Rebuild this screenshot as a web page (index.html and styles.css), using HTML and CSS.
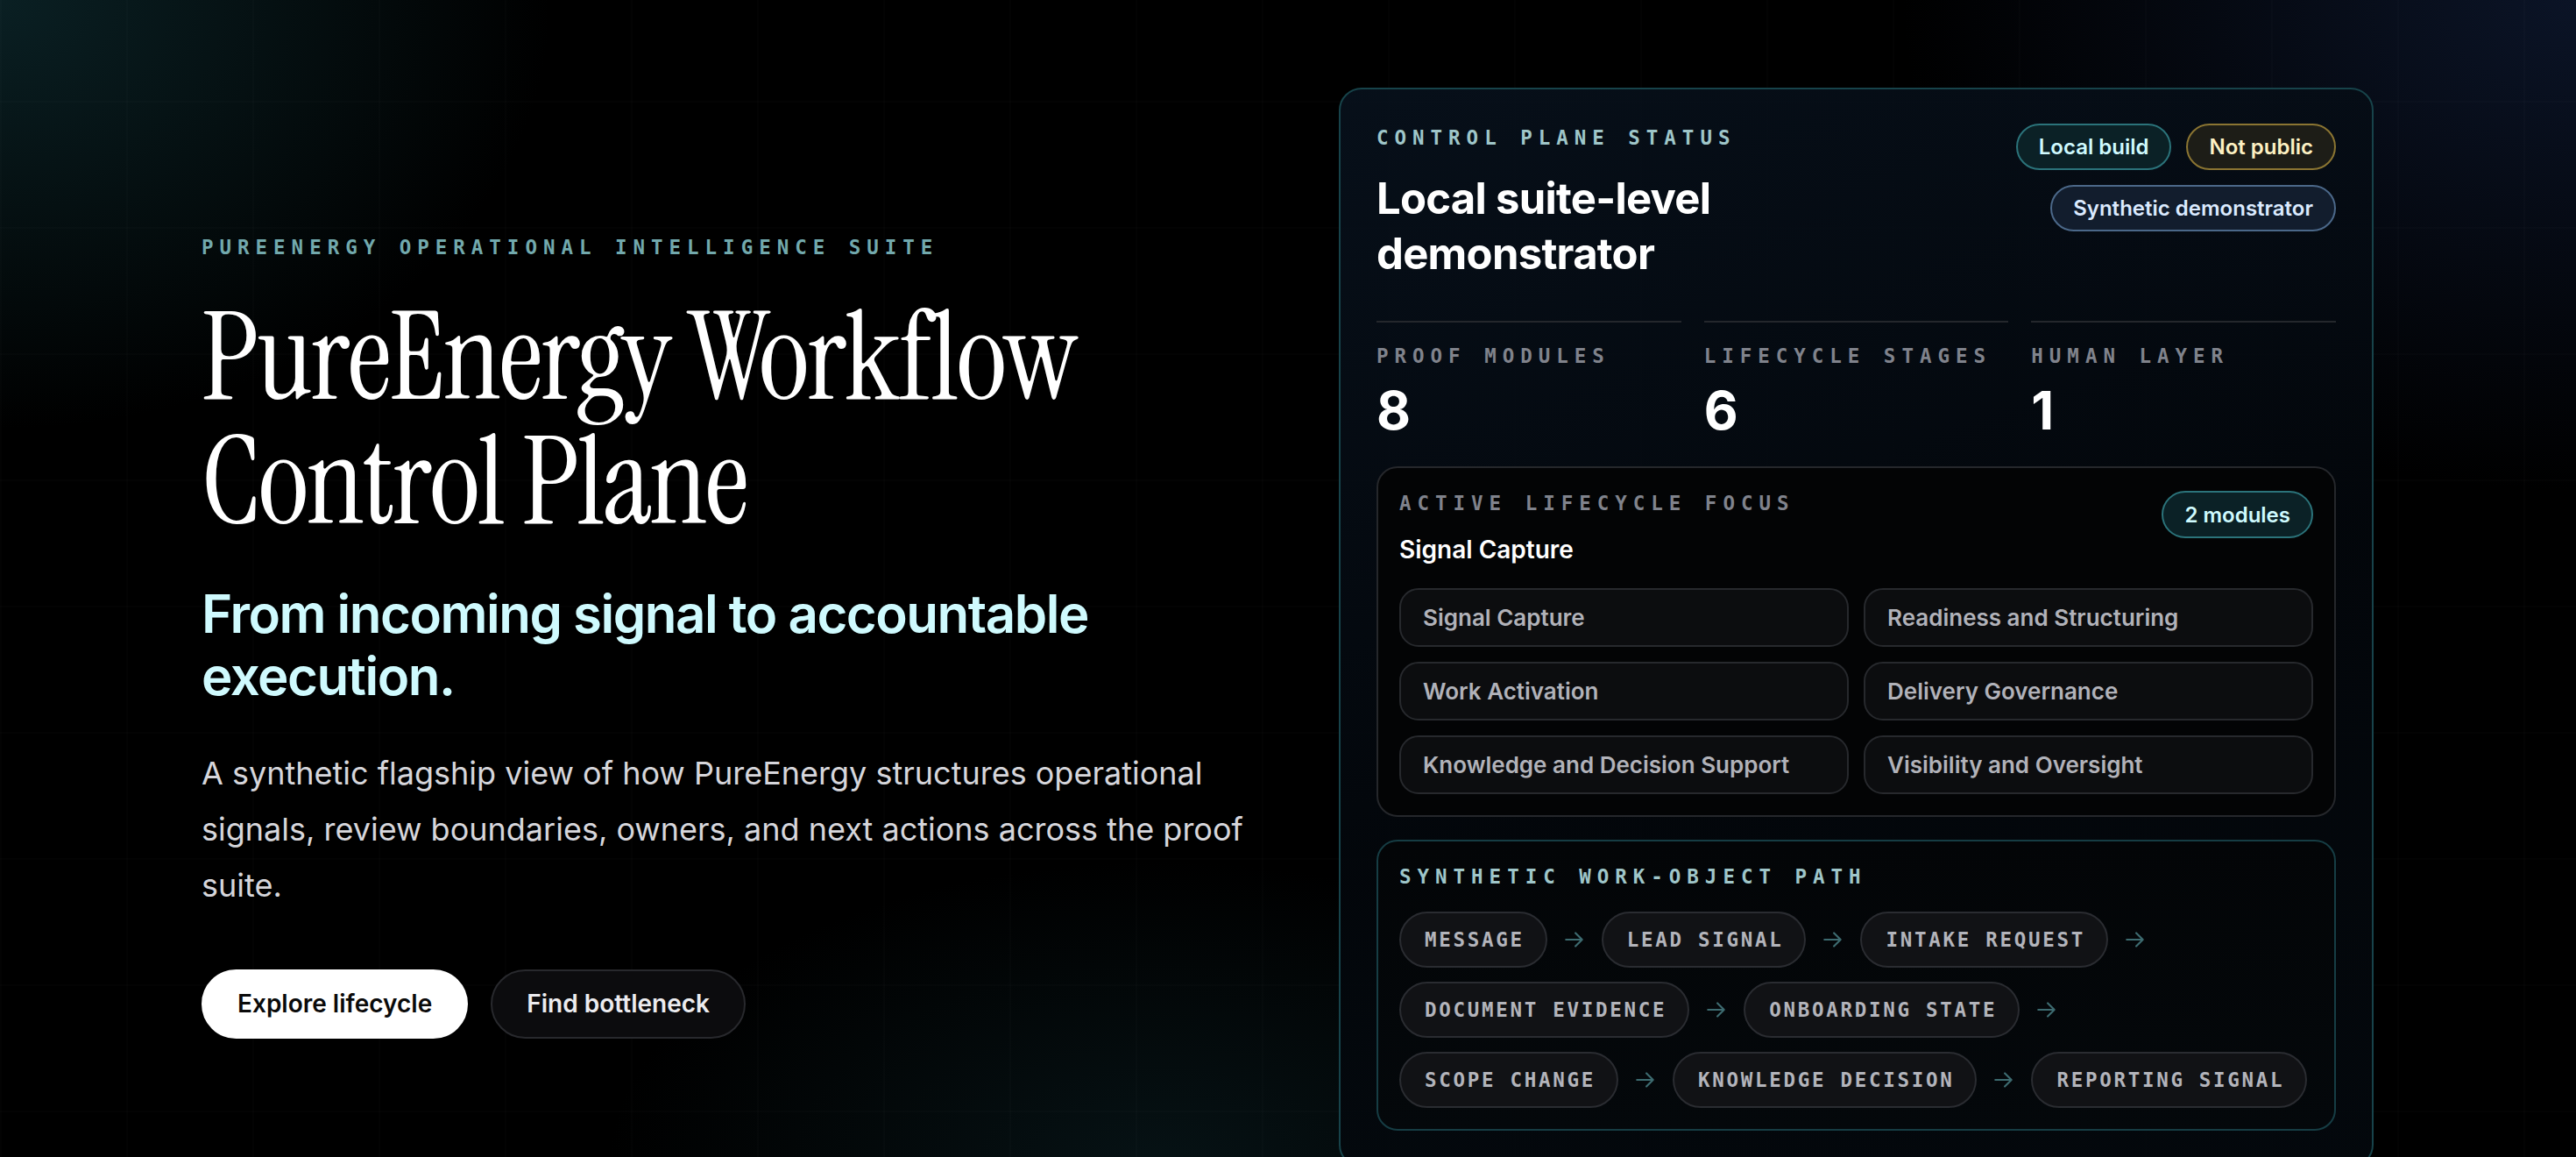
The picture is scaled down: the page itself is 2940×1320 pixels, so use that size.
FILE: index.html
```html
<!DOCTYPE html>
<html lang="en">
<head>
  <meta charset="UTF-8">
  <meta name="viewport" content="width=device-width, initial-scale=1.0">
  <title>PureEnergy Workflow Control Plane</title>
  <link rel="stylesheet" href="styles.css">
</head>
<body>
  <main class="hero">
    <!-- Intro column -->
    <section class="intro">
      <p class="eyebrow">PureEnergy operational intelligence suite</p>
      <h1>PureEnergy Workflow Control Plane</h1>
      <p class="tagline">From incoming signal to accountable execution.</p>
      <p class="lead">A synthetic flagship view of how PureEnergy structures operational signals, review boundaries, owners, and next actions across the proof suite.</p>
      <div class="actions">
        <button class="btn btn-primary">Explore lifecycle</button>
        <button class="btn btn-ghost">Find bottleneck</button>
      </div>
    </section>

    <!-- Status card -->
    <section class="status-card">
      <div class="status-head">
        <div>
          <p class="label label-teal">Control plane status</p>
          <h2>Local suite-level demonstrator</h2>
        </div>
        <div class="badges">
          <span class="badge badge-teal">Local build</span>
          <span class="badge badge-gold">Not public</span>
          <span class="badge badge-blue">Synthetic demonstrator</span>
        </div>
      </div>

      <div class="stats">
        <div class="stat">
          <p class="label">Proof modules</p>
          <strong>8</strong>
        </div>
        <div class="stat">
          <p class="label">Lifecycle stages</p>
          <strong>6</strong>
        </div>
        <div class="stat">
          <p class="label">Human layer</p>
          <strong>1</strong>
        </div>
      </div>

      <div class="panel focus">
        <div class="panel-head">
          <div>
            <p class="label">Active lifecycle focus</p>
            <h3>Signal Capture</h3>
          </div>
          <span class="badge badge-teal">2 modules</span>
        </div>
        <ul class="stage-grid">
          <li>Signal Capture</li>
          <li>Readiness and Structuring</li>
          <li>Work Activation</li>
          <li>Delivery Governance</li>
          <li>Knowledge and Decision Support</li>
          <li>Visibility and Oversight</li>
        </ul>
      </div>

      <div class="panel path">
        <p class="label label-teal">Synthetic work-object path</p>
        <ol class="path-list">
          <li><span class="chip">Message</span><svg class="arrow" viewBox="0 0 24 24"><path d="M3 12h17M13 5l7 7-7 7"/></svg></li>
          <li><span class="chip">Lead signal</span><svg class="arrow" viewBox="0 0 24 24"><path d="M3 12h17M13 5l7 7-7 7"/></svg></li>
          <li><span class="chip">Intake request</span><svg class="arrow" viewBox="0 0 24 24"><path d="M3 12h17M13 5l7 7-7 7"/></svg></li>
          <li><span class="chip">Document evidence</span><svg class="arrow" viewBox="0 0 24 24"><path d="M3 12h17M13 5l7 7-7 7"/></svg></li>
          <li><span class="chip">Onboarding state</span><svg class="arrow" viewBox="0 0 24 24"><path d="M3 12h17M13 5l7 7-7 7"/></svg></li>
          <li><span class="chip">Scope change</span><svg class="arrow" viewBox="0 0 24 24"><path d="M3 12h17M13 5l7 7-7 7"/></svg></li>
          <li><span class="chip">Knowledge decision</span><svg class="arrow" viewBox="0 0 24 24"><path d="M3 12h17M13 5l7 7-7 7"/></svg></li>
          <li><span class="chip">Reporting signal</span></li>
        </ol>
      </div>
    </section>
  </main>
</body>
</html>
```
FILE: styles.css
```css
/* Reset */
* {
  margin: 0;
  padding: 0;
  box-sizing: border-box;
}

html {
  background: #000;
}

body {
  min-height: 1320px;
  font-family: 'Inter', sans-serif;
  color: #fff;
  background:
    linear-gradient(rgba(255, 255, 255, 0.011) 2px, transparent 2px) 0 115px / 144px 144px,
    linear-gradient(90deg, rgba(255, 255, 255, 0.011) 2px, transparent 2px) 0 0 / 144px 144px,
    radial-gradient(900px 700px at 0% 0%, rgba(22, 70, 78, 0.45), transparent 70%),
    radial-gradient(1100px 800px at 100% 0%, rgba(20, 36, 70, 0.55), transparent 70%),
    radial-gradient(900px 500px at 45% 100%, rgba(18, 52, 60, 0.35), transparent 70%),
    #000;
  overflow: hidden;
}

/* Layout */
.hero {
  display: grid;
  grid-template-columns: 1fr 1181px;
  gap: 98px;
  align-items: center;
  padding: 100px 231px 0 230px;
}

/* Mono labels */
.eyebrow,
.label {
  font-family: 'DejaVu Sans Mono', monospace;
  font-size: 22.5px;
  line-height: 32px;
  font-weight: 600;
  letter-spacing: 0.31em;
  text-transform: uppercase;
}

.eyebrow {
  color: #72a9ad;
}

.label {
  color: #80838c;
}

.label-teal {
  color: #9fc6c9;
}

/* Intro */
.intro {
  padding-top: 18px;
}

.intro h1 {
  max-width: 1120px;
  margin-top: 38px;
  font-family: 'Instrument Serif', serif;
  font-weight: 400;
  font-size: 140px;
  line-height: 142px;
  letter-spacing: -0.015em;
}

.tagline {
  margin-top: 45px;
  font-size: 60px;
  line-height: 71px;
  font-weight: 600;
  letter-spacing: -0.025em;
  color: #cffafe;
}

.lead {
  margin-top: 43px;
  font-size: 36px;
  line-height: 64px;
  color: #d6d6db;
}

.actions {
  display: flex;
  gap: 26px;
  margin-top: 64px;
}

.btn {
  height: 79px;
  padding: 0 39px;
  border-radius: 40px;
  font-family: 'Inter', sans-serif;
  font-size: 28px;
  font-weight: 600;
  cursor: pointer;
}

.btn-primary {
  background: #fff;
  color: #0a0a0a;
  border: 2px solid #fff;
}

.btn-ghost {
  background: #0c0c0e;
  color: #ececef;
  border: 2px solid #28292d;
}

/* Status card */
.status-card {
  border: 2px solid #17434a;
  border-radius: 26px;
  padding: 39px 41px 40px;
  background: linear-gradient(160deg, rgba(8, 18, 30, 0.85) 0%, rgba(3, 7, 12, 0.88) 55%, rgba(4, 9, 14, 0.88) 100%);
}

.status-head {
  display: flex;
  justify-content: space-between;
  align-items: flex-start;
  gap: 30px;
}

.status-head h2 {
  margin-top: 22px;
  max-width: 480px;
  font-size: 49px;
  line-height: 63px;
  font-weight: 700;
  letter-spacing: -0.015em;
}

.badges {
  display: flex;
  flex-wrap: wrap;
  justify-content: flex-end;
  gap: 17px;
  max-width: 380px;
}

.badge {
  display: inline-flex;
  align-items: center;
  height: 53px;
  padding: 0 24px;
  border-radius: 27px;
  border: 2px solid;
  font-size: 24px;
  font-weight: 600;
  white-space: nowrap;
}

.badge-teal {
  border-color: #2b737a;
  background: #0b2126;
  color: #cffafe;
}

.badge-gold {
  border-color: #8b7532;
  background: #1d1d17;
  color: #fdf1c3;
}

.badge-blue {
  border-color: #4b6889;
  background: #121d2d;
  color: #dbeafe;
}

/* Stats */
.stats {
  display: grid;
  grid-template-columns: repeat(3, 1fr);
  gap: 26px;
  margin-top: 45px;
}

.stat {
  border-top: 2px solid #24272c;
  padding-top: 22px;
}

.stat strong {
  display: block;
  margin-top: 13px;
  font-size: 60px;
  line-height: 66px;
  font-weight: 700;
}

/* Panels */
.panel {
  border: 2px solid #25272b;
  border-radius: 24px;
  padding: 24px;
  background: #030405;
}

.focus {
  margin-top: 31px;
}

.panel-head {
  display: flex;
  justify-content: space-between;
  align-items: flex-start;
}

.panel-head .badge {
  height: 54px;
  margin-top: 2px;
}

.panel-head h3 {
  margin-top: 19px;
  font-size: 28px;
  line-height: 36px;
  font-weight: 600;
}

.stage-grid {
  list-style: none;
  display: grid;
  grid-template-columns: 1fr 1fr;
  gap: 17px;
  margin-top: 26px;
}

.stage-grid li {
  height: 67px;
  display: flex;
  align-items: center;
  padding: 0 25px;
  border: 2px solid #27292d;
  border-radius: 22px;
  background: #0c0d0f;
  font-size: 26px;
  font-weight: 600;
  color: #b1b2b9;
}

.path {
  margin-top: 26px;
  border-color: #163d44;
  background: linear-gradient(180deg, #030507 0%, #04080b 100%);
}

.path-list {
  list-style: none;
  display: flex;
  flex-wrap: wrap;
  gap: 16px 18px;
  margin-top: 24px;
}

.path-list li {
  display: flex;
  align-items: center;
  gap: 18px;
}

.chip {
  display: inline-flex;
  align-items: center;
  height: 64px;
  padding: 0 24px 0 27px;
  border: 2px solid #2a2c31;
  border-radius: 32px;
  background: #111215;
  font-family: 'DejaVu Sans Mono', monospace;
  font-size: 22.5px;
  font-weight: 600;
  letter-spacing: 0.12em;
  text-transform: uppercase;
  color: #b3b4bb;
}

.arrow {
  width: 26px;
  height: 26px;
  fill: none;
  stroke: #3d6b70;
  stroke-width: 2;
  stroke-linecap: round;
  stroke-linejoin: round;
}
```
